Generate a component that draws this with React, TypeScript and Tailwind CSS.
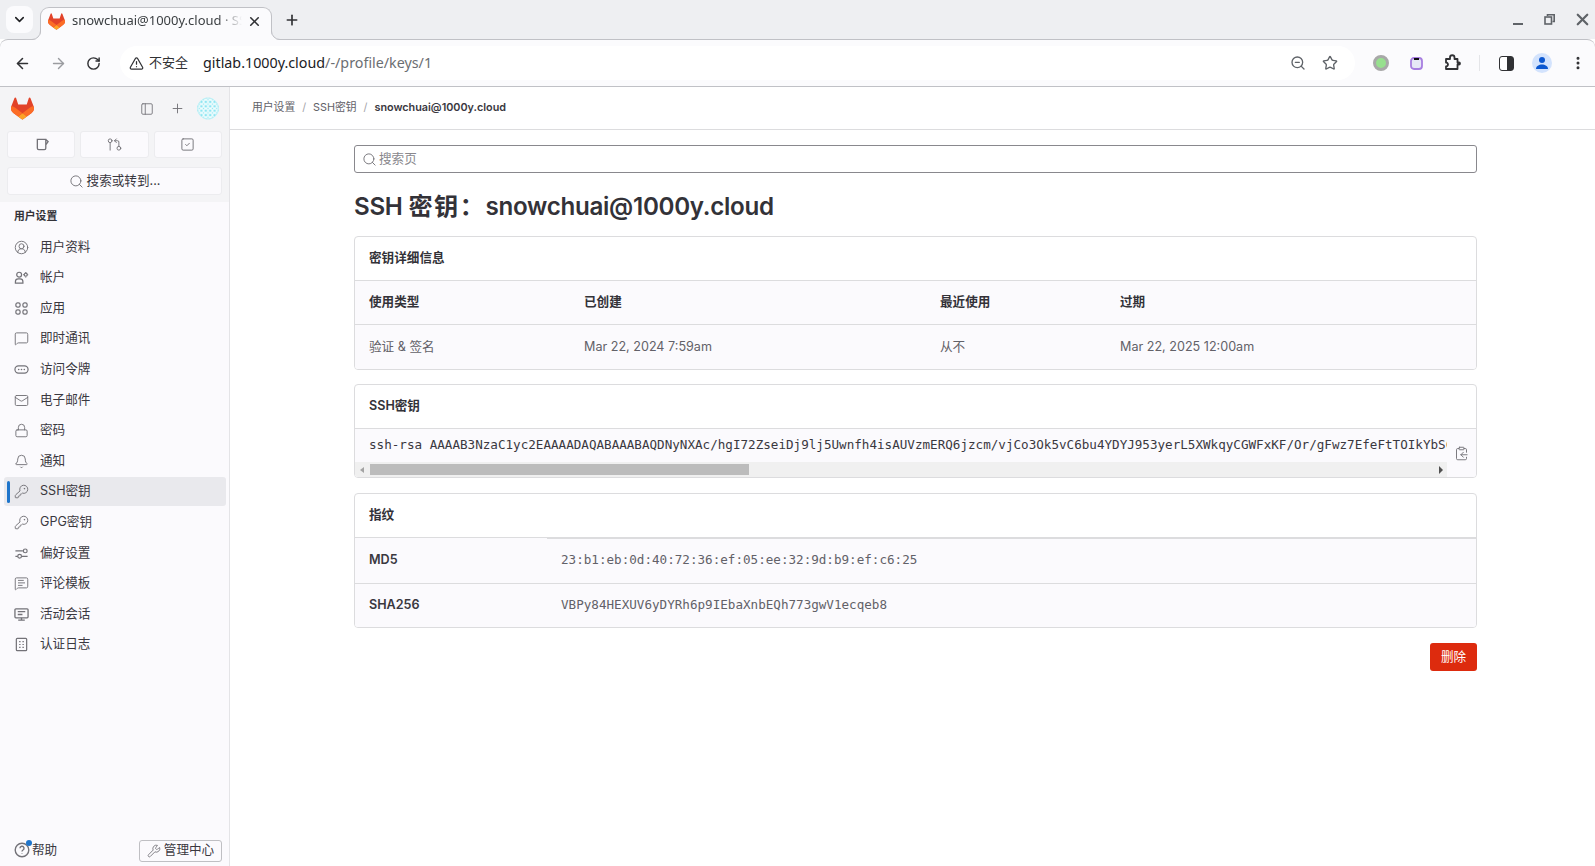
import React from 'react';
import {
  ArrowLeft, ArrowRight, Bell, ChevronDown, CircleUserRound, ClipboardCopy, EllipsisVertical, GitPullRequestArrow,
  KeyRound, Lock, Mail, MessageSquare, MessageSquareText, PanelLeft, Plus, RotateCw, Search,
  SquareCheck, Star, TriangleAlert, Wrench, X, ZoomOut,
} from 'lucide-react';

const cjk = '"Inter","Noto Sans CJK SC",sans-serif';

const Tanuki = ({ size }: { size: number }) => (
  <svg width={size} height={size} viewBox="0 0 25 24" className="shrink-0">
    <path d="m24.507 9.5-.034-.09L21.082.562a.896.896 0 0 0-1.694.091l-2.29 7.01H7.825L5.535.653a.898.898 0 0 0-1.694-.09L.451 9.411.416 9.5a6.297 6.297 0 0 0 2.09 7.278l.012.01.03.022 5.16 3.867 2.56 1.935 1.554 1.176a1.051 1.051 0 0 0 1.268 0l1.555-1.176 2.56-1.935 5.197-3.89.014-.01A6.297 6.297 0 0 0 24.507 9.5Z" fill="#E24329" />
    <path d="m24.507 9.5-.034-.09a11.44 11.44 0 0 0-4.56 2.051l-7.447 5.632 4.742 3.584 5.197-3.89.014-.01A6.297 6.297 0 0 0 24.507 9.5Z" fill="#FC6D26" />
    <path d="m7.707 20.677 2.56 1.935 1.555 1.176a1.051 1.051 0 0 0 1.268 0l1.555-1.176 2.56-1.935-4.743-3.584-4.755 3.584Z" fill="#FCA326" />
    <path d="M5.01 11.461a11.43 11.43 0 0 0-4.56-2.05L.416 9.5a6.297 6.297 0 0 0 2.09 7.278l.012.01.03.022 5.16 3.867 4.745-3.584-7.444-5.632Z" fill="#FC6D26" />
  </svg>
);

const Avatar = () => (
  <svg width="22" height="23" viewBox="0 0 22 22" className="shrink-0 rounded-full">
    <defs>
      <pattern id="idn" width="4.4" height="4.4" patternUnits="userSpaceOnUse">
        <rect width="4.4" height="4.4" fill="#f2fdfe" />
        <path d="M0 0h1.2v1.2H0zM3.2 0h1.2v1.2H3.2zM1.6 1.600h1.200v1.200H1.600zM0 3.200h1.200v1.200H0zM3.200 3.200h1.200v1.200H3.200z" fill="#8fe6f2" />
      </pattern>
    </defs>
    <circle cx="11" cy="11" r="11" fill="url(#idn)" />
    <circle cx="11" cy="11" r="10.500" fill="none" stroke="#bfeff5" />
  </svg>
);

const AccountIcon = () => (
  <svg width="15" height="15" viewBox="0 0 16 16" fill="none" stroke="#737278" strokeWidth="1.3">
    <circle cx="5.5" cy="5" r="2.6" />
    <path d="M1.5 14v-1.5A3 3 0 0 1 4.5 9.500h2a3 3 0 0 1 3 3V14z" />
    <circle cx="12.5" cy="5" r="1.6" />
    <path d="M12.500 2v.8M12.500 7.200V8M9.900 5h.8M14.300 5h.8" />
  </svg>
);
const AppsIcon = () => (
  <svg width="15" height="15" viewBox="0 0 16 16" fill="none" stroke="#737278" strokeWidth="1.3">
    <rect x="2" y="2" width="4.500" height="4.500" rx="1.800" /><rect x="9.500" y="2" width="4.500" height="4.500" rx="1.800" />
    <rect x="2" y="9.500" width="4.500" height="4.500" rx="1.800" /><rect x="9.500" y="9.500" width="4.500" height="4.500" rx="1.800" />
  </svg>
);
const TokenIcon = () => (
  <svg width="15" height="15" viewBox="0 0 16 16" fill="none" stroke="#737278" strokeWidth="1.300">
    <rect x="1" y="4.200" width="14" height="7.600" rx="3.800" />
    <path d="M5 8h.01M8 8h.01M11 8h.01" strokeWidth="1.700" strokeLinecap="round" />
  </svg>
);
const SlidersIcon = () => (
  <svg width="15" height="15" viewBox="0 0 16 16" fill="none" stroke="#737278" strokeWidth="1.300">
    <path d="M1.500 5.200h8M1.500 11h2.500M8.500 11h6" /><circle cx="12" cy="5.200" r="2" /><circle cx="6" cy="11" r="2" />
  </svg>
);
const SessionIcon = () => (
  <svg width="15" height="15" viewBox="0 0 16 16" fill="none" stroke="#737278" strokeWidth="1.400">
    <rect x="1" y="2" width="14" height="9.500" rx="1" /><path d="M4 5h8M4 8h5M8 11.500V14M4.500 14h7" />
  </svg>
);
const LogIcon = () => (
  <svg width="15" height="15" viewBox="0 0 16 16" fill="none" stroke="#737278" strokeWidth="1.300">
    <rect x="2.500" y="1.500" width="11" height="13" rx="1" /><path d="M5.500 5h1.500M9 5h1.500M5.500 8h1.500M9 8h1.500M5.500 11h1.500M9 11h1.500" />
  </svg>
);

const ic = { size: 15, color: '#737278', strokeWidth: 1.500 };
const navItems: { label: string; icon: React.ReactNode; active?: boolean }[] = [
  { label: '用户资料', icon: <CircleUserRound {...ic} /> },
  { label: '帐户', icon: <AccountIcon /> },
  { label: '应用', icon: <AppsIcon /> },
  { label: '即时通讯', icon: <MessageSquare {...ic} /> },
  { label: '访问令牌', icon: <TokenIcon /> },
  { label: '电子邮件', icon: <Mail {...ic} /> },
  { label: '密码', icon: <Lock {...ic} /> },
  { label: '通知', icon: <Bell {...ic} /> },
  { label: 'SSH密钥', icon: <KeyRound {...ic} />, active: true },
  { label: 'GPG密钥', icon: <KeyRound {...ic} /> },
  { label: '偏好设置', icon: <SlidersIcon /> },
  { label: '评论模板', icon: <MessageSquareText {...ic} /> },
  { label: '活动会话', icon: <SessionIcon /> },
  { label: '认证日志', icon: <LogIcon /> },
];

const TabFlare = ({ side }: { side: 'left' | 'right' }) => (
  <svg width="9" height="9" viewBox="0 0 9 9" className={`absolute bottom-0 ${side === 'left' ? '-left-[9px]' : '-right-[9px] -scale-x-100'}`}>
    <path d="M9 0A9 9 0 0 1 0 9H9Z" fill="#fbfbfd" />
    <path d="M8.500 0A8.500 8.500 0 0 1 0 8.500" fill="none" stroke="#c0c1c6" />
  </svg>
);

const BrowserChrome = () => (
  <>
    <div className="h-[39px] shrink-0 bg-[#eeeff2] flex items-end relative">
      <div className="absolute left-[6px] top-[6px] w-[27px] h-[27px] rounded-lg bg-[#fbfbfd] flex items-center justify-center">
        <ChevronDown size={15} color="#202124" strokeWidth={2.500} />
      </div>
      <div className="relative z-10 ml-[40px] w-[232px] h-[33px] -mb-px bg-[#fbfbfd] border border-b-0 border-[#c0c1c6] rounded-t-[9px] flex items-center pl-[7px] pr-[9px] pb-[6px]">
        <TabFlare side="left" />
        <TabFlare side="right" />
        <Tanuki size={17} />
        <span className="ml-[7px] w-[170px] whitespace-nowrap overflow-hidden text-[13px] text-[#3c4043] [mask-image:linear-gradient(to_right,black_86%,transparent)]" style={{ fontFamily: '"Noto Sans",sans-serif' }}>
          snowchuai@1000y.cloud · SSH
        </span>
        <X size={15} color="#303134" strokeWidth={2.500} className="ml-auto" />
      </div>
      <Plus size={16} color="#303134" strokeWidth={2.500} className="ml-[12px] mb-[11px]" />
      <div className="ml-auto flex items-center mb-[10px] pr-[3px]">
        <div className="w-[10px] h-[2px] bg-[#5f6368] mt-[8px]" />
        <svg width="11" height="11" viewBox="0 0 11 11" fill="none" stroke="#5f6368" strokeWidth="1.600" className="ml-[21px]">
          <path d="M3.500 2V.8h6.700v6.700H8.500" /><rect x="1" y="3" width="6.500" height="7" />
        </svg>
        <X size={19} color="#5f6368" strokeWidth={2.800} className="ml-[18px]" />
      </div>
    </div>
    <div className="h-[48px] shrink-0 bg-[#fbfbfd] border-y border-[#c0c1c6] rounded-t-[8px] flex items-center">
      <ArrowLeft size={17} color="#303134" strokeWidth={2.200} className="ml-[14px]" />
      <ArrowRight size={17} color="#9a9ca0" strokeWidth={2} className="ml-[19px]" />
      <RotateCw size={15} color="#303134" strokeWidth={2.300} className="ml-[19px]" />
      <div className="ml-[19px] w-[1235px] h-[34px] rounded-full bg-white flex items-center pl-[9px] pr-[17px]" style={{ fontFamily: '"Noto Sans","Noto Sans CJK SC",sans-serif' }}>
        <TriangleAlert size={15} color="#303134" strokeWidth={2} />
        <span className="ml-[5px] text-[13px] text-[#303134]">不安全</span>
        <span className="ml-[15px] text-[14.300px] text-[#202124]">gitlab.1000y.cloud<span className="text-[#6b6e72]">/-/profile/keys/1</span></span>
        <ZoomOut size={16} color="#5f6368" strokeWidth={2} className="ml-auto" />
        <Star size={16} color="#5f6368" strokeWidth={2} className="ml-[16px]" />
      </div>
      <div className="w-[16px] h-[16px] ml-[18px] rounded-full bg-[#97e08e] border-[3px] border-[#a8a8a8]" />
      <svg width="13" height="13" viewBox="0 0 13 13" className="ml-[21px]">
        <rect x="1" y="1" width="11" height="11" rx="3" fill="#e6e8f6" stroke="#a77ee0" strokeWidth="1.800" />
        <rect x="4" y="1" width="5" height="2" fill="#111" />
      </svg>
      <svg width="18" height="18" viewBox="0 0 18 18" fill="none" stroke="#303134" strokeWidth="1.800" className="ml-[21px]">
        <path d="M2 5h4V3.500a2 2 0 0 1 4.500 0V5h3v3.500h1.500a1 1 0 0 1 0 2h-1.500V15H2v-2.500a2 2 0 0 0 0-4z" strokeLinejoin="round" />
      </svg>
      <div className="ml-[17px] w-px h-[16px] bg-[#e4e5e8]" />
      <div className="ml-[19px] w-[15px] h-[15px] rounded-[3px] border-[1.500px] border-[#303134] bg-[linear-gradient(to_right,#ffffff_50%,#303134_50%)]" />
      <div className="ml-[18px] w-[20px] h-[20px] rounded-full bg-[#d3e3fd] flex items-center justify-center overflow-hidden">
        <svg width="14" height="14" viewBox="0 0 14 14" fill="#0b57d0"><circle cx="7" cy="4" r="3" /><path d="M1 13c0-3 3-4.500 6-4.500s6 1.500 6 4.500z" /></svg>
      </div>
      <EllipsisVertical size={16} color="#303134" strokeWidth={2.500} className="ml-[18px]" />
    </div>
  </>
);

const Sidebar = () => (
  <aside className="w-[230px] shrink-0 bg-[#fbfafd] border-r border-[#e4e4e7] flex flex-col text-[#3a383f] text-[12.600px]">
    <div className="bg-[#f4f4f6] h-[115px] shrink-0 px-[7px] pt-[10px]">
      <div className="flex items-center h-[23px] pl-[4px] pr-[3px]">
        <Tanuki size={23} />
        <PanelLeft size={14} color="#737278" strokeWidth={1.500} className="ml-auto" />
        <Plus size={15} color="#737278" strokeWidth={1.500} className="ml-[16px] mr-[12px]" />
        <Avatar />
      </div>
      <div className="grid grid-cols-3 gap-[5px] mt-[11px]">
        <div className="h-[27px] bg-[#fbfafd] rounded-[3px] border border-[#ececef] flex items-center justify-center">
          <svg width="15" height="15" viewBox="0 0 16 16" fill="none" stroke="#737278" strokeWidth="1.400" className="ml-[2px]"><path d="M2.500 2.500h9v9.500a1.500 1.500 0 0 1-1.500 1.500H4A1.500 1.500 0 0 1 2.500 12zM11.500 2.500l2.500 2.500-2.500 3.500" /></svg>
        </div>
        <div className="h-[27px] bg-[#fbfafd] rounded-[3px] border border-[#ececef] flex items-center justify-center">
          <GitPullRequestArrow size={15} color="#737278" strokeWidth={1.500} />
        </div>
        <div className="h-[27px] bg-[#fbfafd] rounded-[3px] border border-[#ececef] flex items-center justify-center">
          <SquareCheck size={15} color="#737278" strokeWidth={1.500} />
        </div>
      </div>
      <div className="h-[28px] mt-[9px] bg-[#fbfafd] rounded-[3px] border border-[#ececef] flex items-center justify-center gap-[3px]">
        <Search size={15} color="#737278" strokeWidth={1.500} />
        <span>搜索或转到...</span>
      </div>
    </div>
    <div className="pl-[14px] mt-[7px] text-[10.800px] font-semibold text-[#333238] leading-[16px]">用户设置</div>
    <nav className="mt-[7.600px] pl-[4px] pr-[3px] flex flex-col gap-[1.600px]">
      {navItems.map((item) => (
        <div key={item.label} className={`relative h-[29px] flex items-center rounded-[3px] pl-[10px] ${item.active ? 'bg-[#e9e9ed]' : ''}`}>
          {item.active && <span className="absolute left-[3px] top-[4px] bottom-[3px] w-[3px] rounded-sm bg-[#1f75cb]" />}
          <span className="w-[15px] flex justify-center">{item.icon}</span>
          <span className="ml-[11px]">{item.label}</span>
        </div>
      ))}
    </nav>
    <div className="mt-auto h-[27px] mb-[2px] flex items-center justify-between pl-[14px] pr-[7px]">
      <div className="flex items-center gap-[2px]">
        <span className="relative">
          <svg width="16" height="16" viewBox="0 0 16 16" fill="none" stroke="#737278" strokeWidth="1.400"><circle cx="8" cy="8" r="6.800" /><path d="M6 6.300a2 2 0 1 1 3 1.700c-.7.400-1 .8-1 1.500M8 11.600v.4" /></svg>
          <span className="absolute -top-[2px] right-[-2px] w-[6px] h-[6px] rounded-full bg-[#1f75cb]" />
        </span>
        <span>帮助</span>
      </div>
      <div className="h-[22px] w-[83px] bg-[#fbfafd] rounded-[3px] border border-[#bfbfc3] flex items-center justify-center gap-[3px]">
        <Wrench size={14} color="#737278" strokeWidth={1.500} />
        <span>管理中心</span>
      </div>
    </div>
  </aside>
);

const CardHeader = ({ children }: { children: React.ReactNode }) => (
  <div className="h-[44px] pl-[14px] flex items-center font-semibold text-[#333238] border-b border-[#dcdcde]">{children}</div>
);

const detailRow = 'grid grid-cols-[215px_356px_180px_1fr] pl-[14px] h-[44px] items-center';

const Main = () => (
  <main className="flex-1 min-w-0 bg-white">
    <div className="h-[43px] pl-[22px] border-b border-[#dcdcde] flex items-center gap-[7px] text-[10.800px] text-[#626168]">
      <span>用户设置</span><span className="text-[#a4a3a8]">/</span><span>SSH密钥</span><span className="text-[#a4a3a8]">/</span>
      <span className="font-semibold text-[#3a383f]">snowchuai@1000y.cloud</span>
    </div>
    <div className="ml-[124px] w-[1123px] pt-[15px] text-[12.600px]">
      <div className="h-[28px] border border-[#89888d] rounded-[3px] flex items-center pl-[7px] gap-[2px] text-[#89888d]">
        <Search size={15} color="#737278" strokeWidth={1.500} />
        <span>搜索页</span>
      </div>
      <h1 className="mt-[19px] h-[30px] leading-[30px] text-[24.200px] font-semibold text-[#333238] tracking-[-0.300px]">
        SSH <span className="tracking-[1.500px]">密钥：</span>snowchuai@1000y.cloud
      </h1>
      <section className="mt-[14px] border border-[#dcdcde] rounded-[4px] overflow-hidden">
        <CardHeader>密钥详细信息</CardHeader>
        <div className={`${detailRow} bg-[#fbfafd] border-b border-[#dcdcde] font-semibold text-[#333238]`}>
          <span>使用类型</span><span>已创建</span><span>最近使用</span><span>过期</span>
        </div>
        <div className={`${detailRow} bg-[#fbfafd] text-[#626168]`}>
          <span>验证 &amp; 签名</span><span>Mar 22, 2024 7:59am</span><span>从不</span><span>Mar 22, 2025 12:00am</span>
        </div>
      </section>
      <section className="mt-[14px] border border-[#dcdcde] rounded-[4px] overflow-hidden">
        <CardHeader>SSH密钥</CardHeader>
        <div className="flex bg-[#fbfafd]">
          <div className="w-[1092px] shrink-0">
            <div className="h-[33px] pl-[14px] flex items-center overflow-hidden whitespace-nowrap text-[#3a383f]" style={{ fontFamily: '"DejaVu Sans Mono",monospace' }}>
              ssh-rsa AAAAB3NzaC1yc2EAAAADAQABAAABAQDNyNXAc/hgI72ZseiDj9lj5Uwnfh4isAUVzmERQ6jzcm/vjCo3Ok5vC6bu4YDYJ953yerL5XWkqyCGWFxKF/Or/gFwz7EfeFtTOIkYbSC
            </div>
            <div className="h-[15px] bg-[#f0f0f0] flex items-center pl-[15px] relative">
              <span className="absolute left-[5px] top-[5px] w-0 h-0 border-y-[3px] border-y-transparent border-r-[4px] border-r-[#a3a3a3]" />
              <div className="w-[379px] h-[11px] bg-[#bcbcbc]" />
              <span className="absolute right-[4px] top-[4px] w-0 h-0 border-y-[4px] border-y-transparent border-l-[4px] border-l-[#505050]" />
            </div>
          </div>
          <div className="flex-1 flex justify-center pt-[17px]">
            <ClipboardCopy size={15} color="#737278" strokeWidth={1.500} />
          </div>
        </div>
      </section>
      <section className="mt-[15px] border border-[#dcdcde] rounded-[4px] overflow-hidden">
        <CardHeader>指纹</CardHeader>
        {[
          ['MD5', '23:b1:eb:0d:40:72:36:ef:05:ee:32:9d:b9:ef:c6:25'],
          ['SHA256', 'VBPy84HEXUV6yDYRh6p9IEbaXnbEQh773gwV1ecqeb8'],
        ].map(([algo, value], i) => (
          <div key={algo} className={`flex bg-[#fbfafd] ${i > 0 ? 'h-[44px] border-t border-[#dcdcde]' : 'h-[45px]'}`}>
            <div className="w-[192px] pl-[14px] flex items-center font-semibold text-[#3a383f]">{algo}</div>
            <div className={`flex-1 pl-[14px] pb-px flex items-center text-[#626168] ${i === 0 ? 'border-t border-[#dcdcde]' : ''}`} style={{ fontFamily: '"DejaVu Sans Mono",monospace' }}>{value}</div>
          </div>
        ))}
      </section>
      <div className="flex justify-end mt-[15px]">
        <button className="w-[47px] h-[28px] rounded-[3px] bg-[#dd2b0e] text-white text-[12.600px]">删除</button>
      </div>
    </div>
  </main>
);

export default function App() {
  return (
    <div className="w-[1595px] h-[866px] overflow-hidden flex flex-col bg-white" style={{ fontFamily: cjk }}>
      <BrowserChrome />
      <div className="flex flex-1 min-h-0">
        <Sidebar />
        <Main />
      </div>
    </div>
  );
}
